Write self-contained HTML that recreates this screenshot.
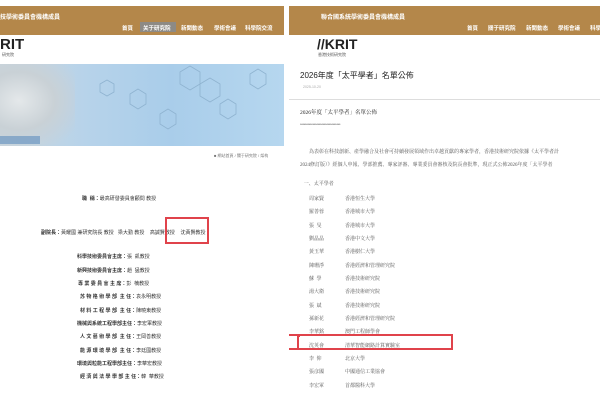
<!DOCTYPE html>
<html><head><meta charset="utf-8"><style>
*{margin:0;padding:0;box-sizing:border-box}
body{width:600px;height:400px;background:#fff;position:relative;overflow:hidden;font-family:"Liberation Sans","Noto Sans CJK TC",sans-serif;color:#333}
.a{position:absolute;white-space:nowrap}
.hdr{position:absolute;top:6px;height:29px;background:#b4874a}
.nav{color:#fff;font-size:5.5px;font-weight:bold;position:absolute;top:24px;white-space:nowrap}
.s{font-size:5px;color:#555}
.b{font-size:5px;font-weight:bold;color:#333}
.serif{font-family:"Liberation Serif","Noto Serif CJK SC",serif}
.box{position:absolute;border:2px solid #e0434b}
</style></head><body>
<!-- left panel -->
<div class="hdr" style="left:0;width:284px"></div>
<div class="a" style="left:0;top:12px;font-size:6px;color:#fff;font-weight:bold">技學術委員會機構成員</div>
<div class="a" style="left:140px;top:22px;width:36px;height:10px;background:#8d8a85"></div>
<div class="nav" style="left:122px">首頁</div>
<div class="nav" style="left:143px">关于研究院</div>
<div class="nav" style="left:181px">新聞動态</div>
<div class="nav" style="left:214px">學術會議</div>
<div class="nav" style="left:245px">科學院交流</div>
<div class="a" style="left:0;top:36px;font-size:15px;font-weight:bold;color:#222">RIT</div>
<div class="a s" style="left:2px;top:52px;font-size:4px">研究院</div>
<div class="a" style="left:0;top:64px;width:284px;height:82px;background:linear-gradient(90deg,#c9d6df 0%,#b7d3ea 30%,#a9cdea 60%,#b6d7ef 100%)"></div>
<div class="a" style="left:0;top:64px;width:75px;height:82px;background:radial-gradient(ellipse at 25% 45%,#e4e8ea 0%,#c9d1d6 45%,rgba(190,205,215,0) 85%)"></div>
<div class="a" style="left:0;top:136px;width:40px;height:8px;background:#4a7fb8;opacity:.5"></div>
<svg class="a" style="left:70px;top:64px" width="214" height="82"><g fill="none" stroke="#8fb3d0" stroke-width="0.8"><path d="M110 8l10-6 10 6v12l-10 6-10-6zM130 20l10-6 10 6v12l-10 6-10-6zM60 30l8-5 8 5v10l-8 5-8-5zM150 40l8-5 8 5v10l-8 5-8-5zM90 50l8-5 8 5v10l-8 5-8-5zM180 10l8-5 8 5v10l-8 5-8-5zM30 20l7-4 7 4v8l-7 4-7-4z"/></g></svg>
<div class="a s" style="left:214px;top:153px;font-size:4px;color:#777">■ 網站首頁 / 關于研究院 / 架构</div>
<div class="a b" style="left:82px;top:195px">職 &nbsp;稱：<span style="font-weight:normal">最高研發委員會顧問 教授</span></div>
<div class="a b" style="left:41px;top:229px">副院長：<span style="font-weight:normal">黃耀國 兼研究院長 教授 &nbsp; 梁大勤 教授 &nbsp;&nbsp; 高誠賢教授 &nbsp;&nbsp; 沈黃賢教授</span></div>
<div class="box" style="left:165px;top:217px;width:44px;height:27px"></div>
<div class="a b" style="left:77px;top:253px">科學技術委員會主席：<span style="font-weight:normal">張 &nbsp;凱教授</span></div>
<div class="a b" style="left:77px;top:267px">新興技術委員會主席：<span style="font-weight:normal">趙 &nbsp;猛教授</span></div>
<div class="a b" style="left:78px;top:280px">專 業 委 員 會 主 席：<span style="font-weight:normal">彭 &nbsp;楠教授</span></div>
<div class="a b" style="left:80px;top:293px">苏 物 格 術 學 部 &nbsp;主 任：<span style="font-weight:normal">袁永明教授</span></div>
<div class="a b" style="left:80px;top:307px">材 料 工 程 學 部 &nbsp;主 任：<span style="font-weight:normal">陳曉東教授</span></div>
<div class="a b" style="left:77px;top:320px">機械與系統工程學部主任：<span style="font-weight:normal">李宏軍教授</span></div>
<div class="a b" style="left:80px;top:333px">人 文 藝 術 學 部 &nbsp;主 任：<span style="font-weight:normal">王岡善教授</span></div>
<div class="a b" style="left:80px;top:347px">能 源 環 境 學 部 &nbsp;主 任：<span style="font-weight:normal">李廷國教授</span></div>
<div class="a b" style="left:77px;top:360px">環境與粒能工程學部主任：<span style="font-weight:normal">李華宏教授</span></div>
<div class="a b" style="left:80px;top:373px">經 濟 與 法 學 學 部 主 任：<span style="font-weight:normal">韓 &nbsp;華教授</span></div>
<div class="box" style="left:297px;top:335px;width:3px;height:15px;border-right:none"></div>
<!-- right panel -->
<div class="hdr" style="left:289px;width:311px"></div>
<div class="a" style="left:321px;top:12px;font-size:6px;color:#fff;font-weight:bold">聯合國系統學術委員會機構成員</div>
<div class="nav" style="left:467px">首頁</div>
<div class="nav" style="left:488px">關于研究院</div>
<div class="nav" style="left:526px">新聞動态</div>
<div class="nav" style="left:558px">學術會議</div>
<div class="nav" style="left:590px">科學</div>
<div class="a" style="left:317px;top:36px;font-size:14px;font-weight:bold;color:#222">//KRIT</div>
<div class="a s" style="left:318px;top:52px;font-size:4px">香港技術研究院</div>
<div class="a" style="left:300px;top:70px;font-size:8px;color:#222">2026年度「太平學者」名單公佈</div>
<div class="a s" style="left:303px;top:85px;font-size:3.5px;color:#aaa">2025-10-20</div>
<div class="a" style="left:289px;top:99px;width:311px;height:1px;background:#ddd"></div>
<div class="a serif" style="left:300px;top:108px;font-size:5.5px;color:#222">2026年度「太平學者」名單公佈</div>
<div class="a" style="left:300px;top:122px;font-size:4px;color:#555;letter-spacing:-0.3px">********************************</div>
<div class="a serif s" style="left:309px;top:148px">為表彰在科技創新、產學融合及社會可持續發展領域作出卓越貢獻的專家學者，香港技術研究院依據《太平學者計</div>
<div class="a serif s" style="left:300px;top:161px">2024修訂版）》經個人申報、學部推薦、專家評審、專業委員會審核及院長會批準，現正式公佈2026年度「太平學者</div>
<div class="a serif s" style="left:300px;top:180px">&nbsp;&nbsp;&nbsp;一、太平學者</div>
<div class="a serif s" style="left:309px;top:193px;line-height:13.35px">周家賢<br>羅善蓉<br>張 &nbsp;旻<br>劉晶晶<br>黃玉華<br>陳珊淨<br>蘇 &nbsp;學<br>湯大衛<br>張 &nbsp;斌<br>孫新花<br>李華銘<br>沈英會<br>李 &nbsp;仰<br>張彦國<br>李宏軍</div>
<div class="a serif s" style="left:345px;top:193px;line-height:13.35px">香港恒生大學<br>香港城市大學<br>香港城市大學<br>香港中文大學<br>香港樹仁大學<br>香港經濟和管理研究院<br>香港技術研究院<br>香港技術研究院<br>香港技術研究院<br>香港經濟和管理研究院<br>澳門工程師學會<br>清華智能網路計算實驗室<br>北京大學<br>中國通信工業協會<br>首都醫科大學</div>
<div class="box" style="left:289px;top:334px;width:164px;height:16px;border-left:none"></div>
</body></html>
